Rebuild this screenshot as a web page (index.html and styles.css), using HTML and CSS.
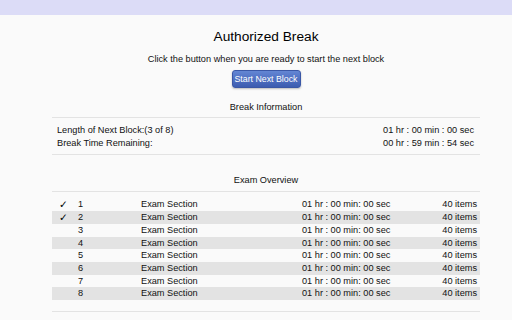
FILE: index.html
```html
<!DOCTYPE html>
<html>
<head>
    <title>Authorized Break</title>
    <meta name="viewport" content="width=device-width, initial-scale=1.0">
    <link rel="stylesheet" href="styles.css">
</head>
<body>
    <div class="topbar"></div>
    <div class="page">
        <h1>Authorized Break</h1>
        <p class="lead">Click the button when you are ready to start the next block</p>
        <div class="actions">
            <button class="start-btn">Start Next Block</button>
        </div>

        <h2 class="section-title">Break Information</h2>
        <div class="info">
            <div class="info-row"><span>Length of Next Block:(3 of 8)</span><span>01 hr : 00 min : 00 sec</span></div>
            <div class="info-row"><span>Break Time Remaining:</span><span>00 hr : 59 min : 54 sec</span></div>
        </div>

        <h2 class="section-title overview">Exam Overview</h2>
        <div class="overview-list">
            <table class="blocks">
                <tr><td class="done">&#10003;</td><td>1</td><td>Exam Section</td><td>01 hr : 00 min: 00 sec</td><td class="items">40 items</td></tr>
                <tr><td class="done">&#10003;</td><td>2</td><td>Exam Section</td><td>01 hr : 00 min: 00 sec</td><td class="items">40 items</td></tr>
                <tr><td class="done"></td><td>3</td><td>Exam Section</td><td>01 hr : 00 min: 00 sec</td><td class="items">40 items</td></tr>
                <tr><td class="done"></td><td>4</td><td>Exam Section</td><td>01 hr : 00 min: 00 sec</td><td class="items">40 items</td></tr>
                <tr><td class="done"></td><td>5</td><td>Exam Section</td><td>01 hr : 00 min: 00 sec</td><td class="items">40 items</td></tr>
                <tr><td class="done"></td><td>6</td><td>Exam Section</td><td>01 hr : 00 min: 00 sec</td><td class="items">40 items</td></tr>
                <tr><td class="done"></td><td>7</td><td>Exam Section</td><td>01 hr : 00 min: 00 sec</td><td class="items">40 items</td></tr>
                <tr><td class="done"></td><td>8</td><td>Exam Section</td><td>01 hr : 00 min: 00 sec</td><td class="items">40 items</td></tr>
            </table>
        </div>
    </div>
</body>
</html>
```

FILE: styles.css
```css
body { margin: 0; background: #fafafa; color: #111; font-family: "Liberation Sans", Arial, sans-serif; font-size: 9.2px; }
.topbar { height: 15px; background: #dcdcf7; }
.page { width: 428px; margin-left: 52px; }
h1 { margin: 14px 0 0; font-size: 13.7px; line-height: 16px; font-weight: normal; text-align: center; color: #000; }
.lead { margin: 8px 0 0; line-height: 12px; text-align: center; }
.actions { display: flex; justify-content: center; margin-top: 5px; }
.start-btn { width: 69px; height: 18px; padding: 0; border: 1px solid #3a57a6; border-radius: 3px; background: linear-gradient(#6386d4, #3c5cb0); color: #fff; font-family: "Liberation Sans", Arial, sans-serif; font-size: 8.8px; box-shadow: 0 1px 2px rgba(0,0,0,0.25); cursor: pointer; }
.section-title { margin: 13px 0 0; padding-bottom: 4px; border-bottom: 1px solid #e3e3e3; font-size: 9.2px; line-height: 12px; font-weight: normal; text-align: center; }
.section-title.overview { margin-top: 19px; padding-bottom: 5px; }
.info { padding: 6px 6px 5px 5px; border-bottom: 1px solid #e3e3e3; }
.info-row { display: flex; justify-content: space-between; line-height: 12.7px; }
.overview-list { padding: 6px 0 11px; border-bottom: 1px solid #e3e3e3; }
.blocks { width: 100%; border-collapse: collapse; table-layout: fixed; }
.blocks td { padding: 0; height: 12.7px; line-height: 12.7px; white-space: nowrap; }
.blocks tr:nth-child(even) { background: #e3e3e3; }
.blocks td:nth-child(1) { width: 19px; padding-left: 7px; }
.blocks td:nth-child(2) { width: 63px; }
.blocks td:nth-child(3) { width: 161px; }
.blocks td.done { font-family: "DejaVu Sans", sans-serif; font-size: 10.5px; color: #000; }
.blocks td.items { text-align: right; padding-right: 3px; }
```
